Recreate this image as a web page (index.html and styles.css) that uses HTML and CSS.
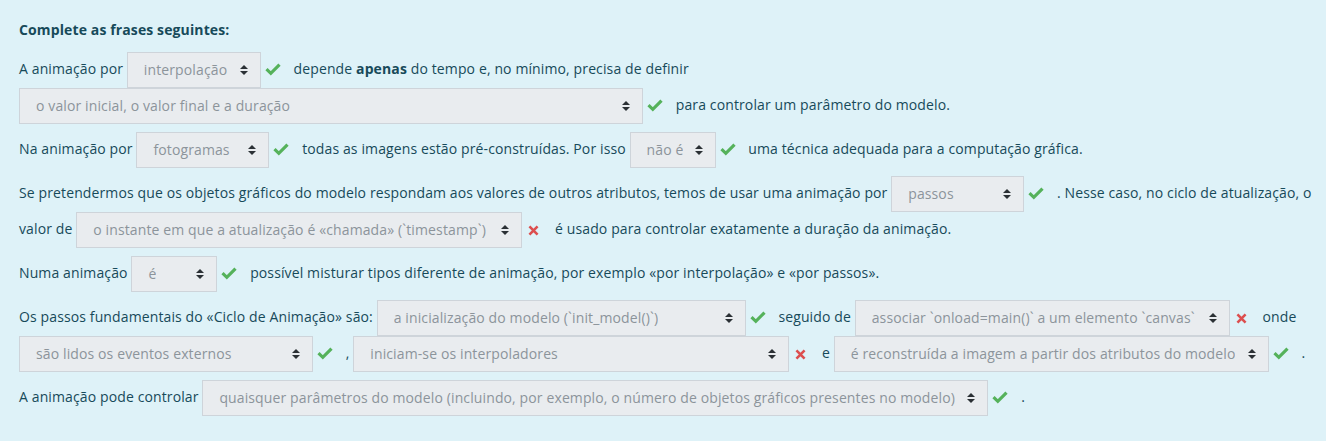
FILE: index.html
```html
<!DOCTYPE html>
<html lang="pt">
<head>
<meta charset="utf-8">
<title>Complete as frases seguintes</title>
<link rel="stylesheet" href="styles.css">
</head>
<body>
<div class="formulation">
  <p class="qtitle"><strong>Complete as frases seguintes:</strong></p>

  <p>A animação por <span class="control"><span class="sel w-134"><span class="val">interpolação</span><svg class="arrow" viewBox="0 0 8 10"><path d="M4 0L8 4H0Z M4 10L0 6H8Z"/></svg></span><svg class="ico ok" viewBox="0 0 16 16"><path d="M1.5 8.2 5.8 12.3 14.5 3.6"/></svg></span> depende <strong>apenas</strong> do tempo e, no mínimo, precisa de definir <span class="control"><span class="sel w-624"><span class="val">o valor inicial, o valor final e a duração</span><svg class="arrow" viewBox="0 0 8 10"><path d="M4 0L8 4H0Z M4 10L0 6H8Z"/></svg></span><svg class="ico ok" viewBox="0 0 16 16"><path d="M1.5 8.2 5.8 12.3 14.5 3.6"/></svg></span> para controlar um parâmetro do modelo.</p>

  <p>Na animação por <span class="control"><span class="sel w-133"><span class="val">fotogramas</span><svg class="arrow" viewBox="0 0 8 10"><path d="M4 0L8 4H0Z M4 10L0 6H8Z"/></svg></span><svg class="ico ok" viewBox="0 0 16 16"><path d="M1.5 8.2 5.8 12.3 14.5 3.6"/></svg></span> todas as imagens estão pré-construídas. Por isso <span class="control"><span class="sel w-86"><span class="val">não é</span><svg class="arrow" viewBox="0 0 8 10"><path d="M4 0L8 4H0Z M4 10L0 6H8Z"/></svg></span><svg class="ico ok" viewBox="0 0 16 16"><path d="M1.5 8.2 5.8 12.3 14.5 3.6"/></svg></span> uma técnica adequada para a computação gráfica.</p>

  <p>Se pretendermos que os objetos gráficos do modelo respondam aos valores de outros atributos, temos de usar uma animação por <span class="control"><span class="sel w-133"><span class="val">passos</span><svg class="arrow" viewBox="0 0 8 10"><path d="M4 0L8 4H0Z M4 10L0 6H8Z"/></svg></span><svg class="ico ok" viewBox="0 0 16 16"><path d="M1.5 8.2 5.8 12.3 14.5 3.6"/></svg></span> <span>. Nesse caso, no ciclo de atualização, o</span> <span>valor de</span> <span class="control"><span class="sel w-446"><span class="val">o instante em que a atualização é «chamada» (`timestamp`)</span><svg class="arrow" viewBox="0 0 8 10"><path d="M4 0L8 4H0Z M4 10L0 6H8Z"/></svg></span><svg class="ico bad" viewBox="0 0 16 16"><path d="M3 3 13 13 M13 3 3 13"/></svg></span> é usado para controlar exatamente a duração da animação.</p>

  <p>Numa animação <span class="control"><span class="sel w-86"><span class="val">é</span><svg class="arrow" viewBox="0 0 8 10"><path d="M4 0L8 4H0Z M4 10L0 6H8Z"/></svg></span><svg class="ico ok" viewBox="0 0 16 16"><path d="M1.5 8.2 5.8 12.3 14.5 3.6"/></svg></span> possível misturar tipos diferente de animação, por exemplo «por interpolação» e «por passos».</p>

  <p>Os passos fundamentais do «Ciclo de Animação» são: <span class="control"><span class="sel w-369"><span class="val">a inicialização do modelo (`init_model()`)</span><svg class="arrow" viewBox="0 0 8 10"><path d="M4 0L8 4H0Z M4 10L0 6H8Z"/></svg></span><svg class="ico ok" viewBox="0 0 16 16"><path d="M1.5 8.2 5.8 12.3 14.5 3.6"/></svg></span> seguido de <span class="control"><span class="sel w-375"><span class="val">associar `onload=main()` a um elemento `canvas`</span><svg class="arrow" viewBox="0 0 8 10"><path d="M4 0L8 4H0Z M4 10L0 6H8Z"/></svg></span><svg class="ico bad" viewBox="0 0 16 16"><path d="M3 3 13 13 M13 3 3 13"/></svg></span> onde <span class="control"><span class="sel w-294"><span class="val">são lidos os eventos externos</span><svg class="arrow" viewBox="0 0 8 10"><path d="M4 0L8 4H0Z M4 10L0 6H8Z"/></svg></span><svg class="ico ok" viewBox="0 0 16 16"><path d="M1.5 8.2 5.8 12.3 14.5 3.6"/></svg></span> , <span class="control"><span class="sel w-436"><span class="val">iniciam-se os interpoladores</span><svg class="arrow" viewBox="0 0 8 10"><path d="M4 0L8 4H0Z M4 10L0 6H8Z"/></svg></span><svg class="ico bad" viewBox="0 0 16 16"><path d="M3 3 13 13 M13 3 3 13"/></svg></span> e <span class="control"><span class="sel w-435"><span class="val">é reconstruída a imagem a partir dos atributos do modelo</span><svg class="arrow" viewBox="0 0 8 10"><path d="M4 0L8 4H0Z M4 10L0 6H8Z"/></svg></span><svg class="ico ok" viewBox="0 0 16 16"><path d="M1.5 8.2 5.8 12.3 14.5 3.6"/></svg></span> .</p>

  <p>A animação pode controlar <span class="control"><span class="sel w-786"><span class="val">quaisquer parâmetros do modelo (incluindo, por exemplo, o número de objetos gráficos presentes no modelo)</span><svg class="arrow" viewBox="0 0 8 10"><path d="M4 0L8 4H0Z M4 10L0 6H8Z"/></svg></span><svg class="ico ok" viewBox="0 0 16 16"><path d="M1.5 8.2 5.8 12.3 14.5 3.6"/></svg></span> .</p>
</div>
</body>
</html>
```
FILE: styles.css
```css
html, body {
  margin: 0;
  padding: 0;
  background: #def2f8;
}

.formulation {
  box-sizing: border-box;
  width: 1326px;
  min-height: 441px;
  padding: 19px 8px 18px 19px;
  background: #def2f8;
  color: #174a5a;
  font-family: "Open Sans", "Liberation Sans", sans-serif;
  font-size: 14px;
  letter-spacing: 0.12px;
  line-height: 22px;
}

.formulation p {
  margin: 0 0 8px 0;
}

.formulation strong {
  font-weight: 700;
}

.formulation .qtitle {
  margin-bottom: 11px;
}

.control {
  white-space: nowrap;
}

.sel {
  display: inline-flex;
  align-items: center;
  justify-content: space-between;
  box-sizing: border-box;
  height: 36px;
  padding: 0 12px 0 16px;
  vertical-align: middle;
  background: #e9ecef;
  border: 1px solid #ced4da;
  color: #8c949b;
  white-space: nowrap;
  overflow: hidden;
}

.sel .val {
  overflow: hidden;
}

.sel .arrow {
  flex: none;
  width: 8px;
  height: 10px;
  margin-left: 6px;
  fill: #2b3035;
}

.ico {
  display: inline-block;
  width: 16px;
  height: 16px;
  margin: 0 9px 0 4px;
  vertical-align: middle;
  fill: none;
  stroke-linecap: butt;
}

.ico.ok {
  stroke: #55b25b;
  stroke-width: 3.2;
  position: relative;
  top: -1px;
}

.ico.bad {
  stroke: #dc4f4f;
  stroke-width: 3.2;
  width: 13px;
  height: 13px;
  margin-left: 5px;
  margin-right: 11px;
}

.w-86 { width: 86px; }
.w-133 { width: 133px; }
.w-134 { width: 134px; }
.w-294 { width: 294px; }
.w-369 { width: 369px; }
.w-375 { width: 375px; }
.w-435 { width: 435px; }
.w-436 { width: 436px; }
.w-446 { width: 446px; }
.w-624 { width: 624px; }
.w-786 { width: 786px; }
```
